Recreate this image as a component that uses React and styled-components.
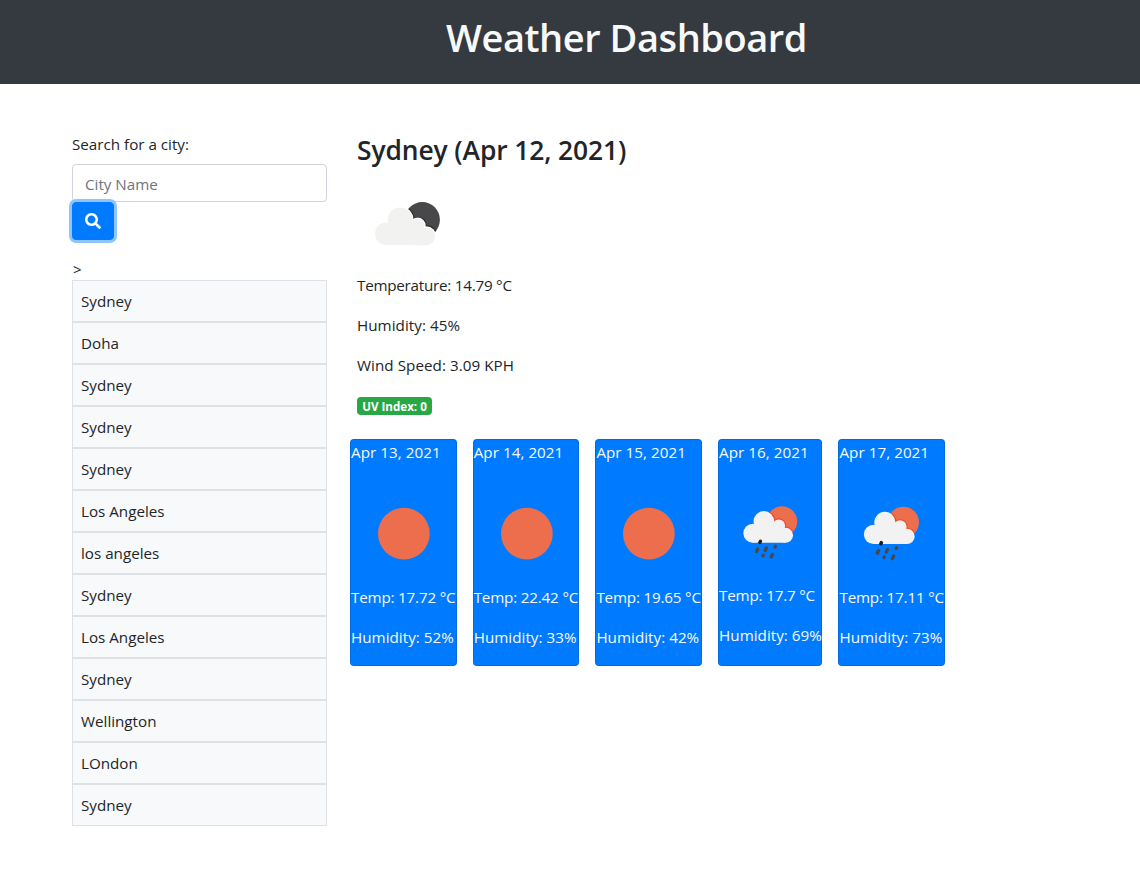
import React from "react";
import styled, { createGlobalStyle } from "styled-components";

const GlobalStyle = createGlobalStyle`
  *, *::before, *::after { box-sizing: border-box; }
  body {
    margin: 0;
    background: #fff;
    color: #212529;
    font-family: "Segoe UI", "Open Sans", "Noto Sans", sans-serif;
    font-size: 15.2px;
    line-height: 24px;
  }
`;

const Header = styled.header`
  height: 84px;
  padding: 13px 0 0 446px;
  background: #343a40;
`;

const Title = styled.h1`
  margin: 0;
  color: #f8f9fa;
  font-size: 38px;
  font-weight: 600;
  line-height: 48px;
  letter-spacing: -0.45px;
  white-space: nowrap;
`;

const Layout = styled.div`
  display: flex;
  gap: 23px;
  padding: 48px 72px 0;
`;

const Sidebar = styled.aside`
  flex: 0 0 255px;
`;

const Label = styled.label`
  display: block;
  margin-bottom: 8px;
  line-height: 24px;
`;

const CityInput = styled.input`
  display: block;
  width: 100%;
  height: 38px;
  padding: 8px 12px 6px;
  border: 1px solid #ced4da;
  border-radius: 4px;
  color: #495057;
  font: inherit;
  &::placeholder { color: #6c757d; opacity: 1; }
`;

const SearchButton = styled.button`
  position: relative;
  display: flex;
  align-items: center;
  justify-content: center;
  width: 42px;
  height: 38px;
  padding: 0;
  border: 1px solid #007bff;
  border-radius: 4px;
  background: #007bff;
  color: #fff;
  box-shadow: 0 0 0 3px #8fc5ff;
`;

const Prompt = styled.div`
  margin-top: 16px;
  padding-left: 1px;
  height: 24px;
  font-size: 15px;
  line-height: 26px;
`;

const History = styled.ul`
  margin: 0;
  padding: 0;
  list-style: none;
`;

const HistoryItem = styled.li`
  height: 42px;
  padding: 8px;
  border: 1px solid #dee2e6;
  background: #f8f9fa;
`;

const Main = styled.main`
  flex: 1;
`;

const Current = styled.section`
  padding-left: 7px;
`;

const City = styled.h3`
  margin: 0 0 8px;
  padding-top: 2px;
  height: 34px;
  font-size: 26.4px;
  font-weight: 600;
  line-height: 33px;
  letter-spacing: -0.1px;
`;

const CurrentIcon = styled.svg`
  display: block;
  width: 100px;
  height: 100px;
  margin-bottom: -1px;
`;

const Reading = styled.p`
  margin: 0 0 16px;
  letter-spacing: ${(p) => p.$tracking || 0}px;
  white-space: nowrap;
`;

const Badge = styled.span`
  display: block;
  width: 75px;
  height: 18px;
  margin-top: 20px;
  border-radius: 4px;
  background: #28a745;
  color: #fff;
  font-size: 11.6px;
  font-weight: 700;
  line-height: 19px;
  text-align: center;
  white-space: nowrap;
`;

const Forecast = styled.section`
  display: flex;
  gap: 16px;
  margin-top: 24px;
`;

const Card = styled.article`
  flex: 0 0 ${(p) => p.$width}px;
  min-width: 0;
  height: 227px;
  border: 1px solid rgba(0, 0, 0, 0.125);
  border-radius: 4px;
  background: #007bff;
  color: #f8f9fa;
`;

const CardIcon = styled.svg`
  display: block;
  width: 100%;
  margin-top: 16.5px;
  aspect-ratio: 1;
`;

function SearchIcon() {
  return (
    <svg width="16" height="16" viewBox="0 0 512 512" fill="currentColor">
      <path d="M505 442.700 405.300 343c-4.500-4.500-10.600-7-17-7H372c27.600-35.300 44-79.700 44-128C416 93.100 322.900 0 208 0S0 93.100 0 208s93.100 208 208 208c48.300 0 92.700-16.400 128-44v16.300c0 6.400 2.500 12.500 7 17l99.700 99.700c9.400 9.400 24.600 9.400 33.900 0l28.300-28.300c9.400-9.400 9.400-24.600.1-34zM208 336c-70.700 0-128-57.200-128-128 0-70.700 57.200-128 128-128 70.700 0 128 57.200 128 128 0 70.700-57.200 128-128 128z" />
    </svg>
  );
}

function NightCloud() {
  return (
    <CurrentIcon viewBox="0 0 100 100">
      <clipPath id="moon">
        <circle cx="65.300" cy="45.700" r="17.600" />
      </clipPath>
      <circle cx="65.300" cy="45.700" r="17.600" fill="#48484a" />
      <g clipPath="url(#moon)" fill="#222224">
        <circle cx="43" cy="45.700" r="14.400" />
        <circle cx="60.700" cy="51.600" r="8.900" />
        <circle cx="69.300" cy="62.300" r="11" />
      </g>
      <g fill="#fff">
        <circle cx="43" cy="45.700" r="13.500" />
        <circle cx="60.700" cy="51.600" r="8" />
        <circle cx="69.300" cy="62.300" r="10" />
      </g>
      <g fill="#f2f2f1">
        <circle cx="29.300" cy="59.700" r="11.300" />
        <circle cx="43" cy="45.700" r="12.300" />
        <circle cx="60.700" cy="51.600" r="6.800" />
        <circle cx="69.300" cy="62.300" r="8.900" />
        <path d="M29.300 71V55L43 45 60.700 50 69.300 62V71.200z" />
      </g>
    </CurrentIcon>
  );
}

function Sun() {
  return (
    <CardIcon viewBox="0 0 100 100">
      <circle cx="50.500" cy="50.300" r="24.700" fill="#ec6e4c" />
    </CardIcon>
  );
}

const DROPS = [
  [37.2, 67.7, 1.2],
  [45.7, 66.7, 1.2],
  [54.9, 64.1, 0.4],
  [43.1, 72.9, 0.2],
  [51.6, 72.9, 1.2],
];

function SunRain({ id }) {
  return (
    <CardIcon viewBox="0 0 100 100">
      <clipPath id={id}>
        <circle cx="61.500" cy="39.500" r="14.900" />
      </clipPath>
      <circle cx="61.500" cy="39.500" r="14.900" fill="#ec6e4c" />
      <g clipPath={`url(#${id})`} fill="#ea4b25">
        <circle cx="43.800" cy="39.500" r="11.100" />
        <circle cx="58.300" cy="43.800" r="7.300" />
        <circle cx="65" cy="52.900" r="8.300" />
      </g>
      <g fill="#f2f2f2">
        <circle cx="33" cy="51" r="9.200" />
        <circle cx="43.800" cy="39.500" r="10.100" />
        <circle cx="58.300" cy="43.800" r="6.300" />
        <circle cx="65" cy="52.900" r="7.300" />
        <path d="M33 60.200V47L44 40 58.300 42 65 52V60.200z" />
      </g>
      <g stroke="#48484a" strokeWidth="3.300" strokeLinecap="round">
        {DROPS.map(([x, y, h]) => (
          <path key={x} d={`M${x - h * 0.5} ${y + h}L${x + h * 0.5} ${y - h}`} />
        ))}
        <path d="M39.900 60L40.500 58.900" stroke="#1d1d1f" />
      </g>
    </CardIcon>
  );
}

const SEARCHES = [
  "Sydney", "Doha", "Sydney", "Sydney", "Sydney", "Los Angeles", "los angeles",
  "Sydney", "Los Angeles", "Sydney", "Wellington", "LOndon", "Sydney",
];

const DAYS = [
  { date: "Apr 13, 2021", temp: "17.72", humidity: 52, icon: Sun, width: 106.7 },
  { date: "Apr 14, 2021", temp: "22.42", humidity: 33, icon: Sun, width: 106.7 },
  { date: "Apr 15, 2021", temp: "19.65", humidity: 42, icon: Sun, width: 106.7 },
  { date: "Apr 16, 2021", temp: "17.7", humidity: 69, icon: SunRain, width: 104.4 },
  { date: "Apr 17, 2021", temp: "17.11", humidity: 73, icon: SunRain, width: 106.7 },
];

export default function App() {
  return (
    <>
      <GlobalStyle />
      <Header>
        <Title>Weather Dashboard</Title>
      </Header>
      <Layout>
        <Sidebar>
          <Label htmlFor="city">Search for a city:</Label>
          <CityInput id="city" placeholder="City Name" />
          <SearchButton aria-label="Search">
            <SearchIcon />
          </SearchButton>
          <Prompt>&gt;</Prompt>
          <History>
            {SEARCHES.map((city, i) => (
              <HistoryItem key={i}>{city}</HistoryItem>
            ))}
          </History>
        </Sidebar>
        <Main>
          <Current>
            <City>Sydney (Apr 12, 2021)</City>
            <NightCloud />
            <Reading $tracking={-0.23}>Temperature: 14.79 °C</Reading>
            <Reading $tracking={0.05}>Humidity: 45%</Reading>
            <Reading $tracking={0.05}>Wind Speed: 3.09 KPH</Reading>
            <Badge>UV Index: 0</Badge>
          </Current>
          <Forecast>
            {DAYS.map(({ date, temp, humidity, icon: Icon, width }, i) => (
              <Card key={date} $width={width}>
                <Reading $tracking={0.05}>{date}</Reading>
                <Icon id={`sun-${i}`} />
                <Reading $tracking={-0.18}>Temp: {temp} °C</Reading>
                <Reading $tracking={0.03}>Humidity: {humidity}%</Reading>
              </Card>
            ))}
          </Forecast>
        </Main>
      </Layout>
    </>
  );
}
